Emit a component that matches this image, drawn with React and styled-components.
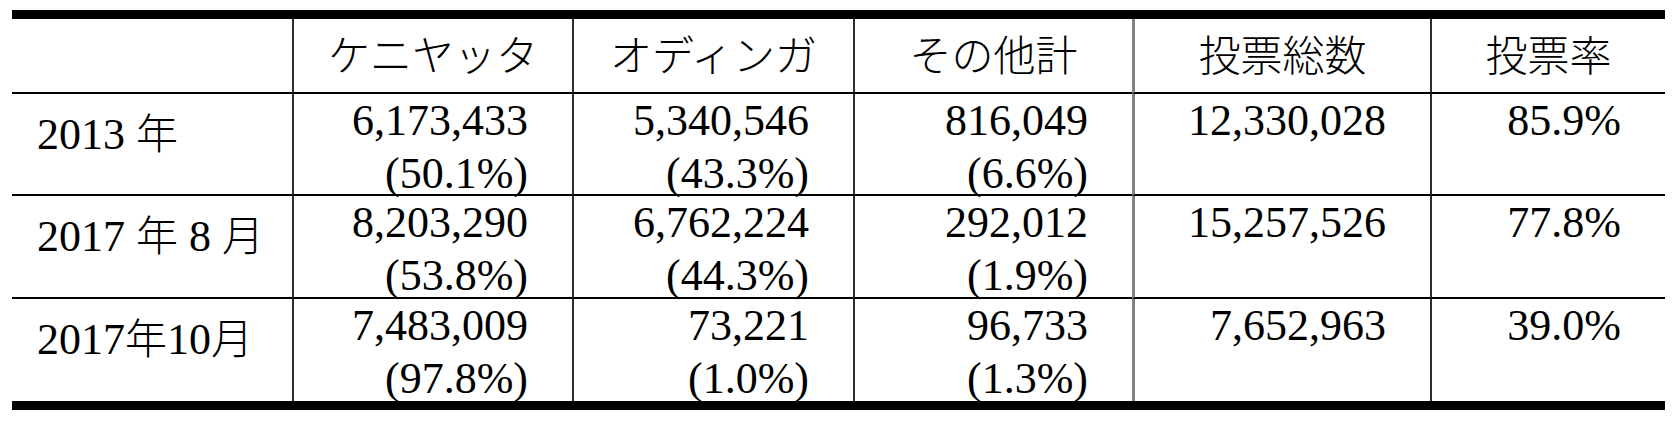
import React from 'react';
import styled, { createGlobalStyle } from 'styled-components';

const GlobalStyle = createGlobalStyle`
    html, body {
        margin: 0;
        padding: 0;
        background: #fff;
    }
    body {
        font-family: "Liberation Serif", serif;
        color: #000;
    }
`;

// Styled components
const Page = styled.div`
    padding: 10px 11px 0 12px;
`;

const Grid = styled.div`
    display: grid;
    grid-template-columns: 280px 280px 281px 279px 298px 235px;
    grid-template-rows: 75px 102px 103px 102px;
    width: 1653px;
    border-top: 9px solid #000;
    border-bottom: 9px solid #000;
    font-family: "Liberation Serif", serif;
    font-size: 44px;
`;

const ruleFor = (col) => {
    if (col === 0) return 'none';
    if (col === 4) return '3px solid #838383';
    return '2px solid #2e2e2e';
};

const Cell = styled.div`
    box-sizing: border-box;
    border-left: ${({ $col }) => ruleFor($col)};
    border-bottom: ${({ $last }) => ($last ? 'none' : '2px solid #000')};
    min-width: 0;
`;

const HeadCell = styled(Cell)`
    display: flex;
    align-items: center;
    justify-content: center;
    padding-bottom: 6px;
    font-family: "Noto Sans CJK JP", sans-serif;
    font-weight: 300;
    font-size: 42px;
    line-height: 1;
`;

const Kanji = styled.span`
    font-family: "Noto Sans CJK JP", sans-serif;
    font-weight: 300;
    font-size: 42px;
`;

const YearCell = styled(Cell)`
    padding: 10px 0 0 25px;
    line-height: 53px;
    white-space: nowrap;
`;

const NumCell = styled(Cell)`
    padding: 0 44px 0 0;
    text-align: right;
    line-height: 53px;
    white-space: nowrap;
`;

const Line = styled.span`
    display: block;
`;

const headers = ['', 'ケニヤッタ', 'オディンガ', 'その他計', '投票総数', '投票率'];

const rows = [
    {
        label: [['2013 '], ['年', true]],
        kenyatta: ['6,173,433', '(50.1%)'],
        odinga: ['5,340,546', '(43.3%)'],
        others: ['816,049', '(6.6%)'],
        total: '12,330,028',
        turnout: '85.9%',
    },
    {
        label: [['2017 '], ['年', true], [' 8 '], ['月', true]],
        kenyatta: ['8,203,290', '(53.8%)'],
        odinga: ['6,762,224', '(44.3%)'],
        others: ['292,012', '(1.9%)'],
        total: '15,257,526',
        turnout: '77.8%',
    },
    {
        label: [['2017'], ['年', true], ['10'], ['月', true]],
        kenyatta: ['7,483,009', '(97.8%)'],
        odinga: ['73,221', '(1.0%)'],
        others: ['96,733', '(1.3%)'],
        total: '7,652,963',
        turnout: '39.0%',
    },
];

const App = () => {
    return (
        <Page>
            <GlobalStyle />
            <Grid>
                {headers.map((h, i) => (
                    <HeadCell key={i} $col={i}>{h}</HeadCell>
                ))}
                {rows.map((r, ri) => {
                    const last = ri === rows.length - 1;
                    return (
                        <React.Fragment key={ri}>
                            <YearCell $col={0} $last={last}>
                                {r.label.map(([t, cjk], i) =>
                                    cjk ? <Kanji key={i}>{t}</Kanji> : <React.Fragment key={i}>{t}</React.Fragment>
                                )}
                            </YearCell>
                            {[r.kenyatta, r.odinga, r.others].map((pair, ci) => (
                                <NumCell key={ci} $col={ci + 1} $last={last}>
                                    <Line>{pair[0]}</Line>
                                    <Line>{pair[1]}</Line>
                                </NumCell>
                            ))}
                            <NumCell $col={4} $last={last}>{r.total}</NumCell>
                            <NumCell $col={5} $last={last}>{r.turnout}</NumCell>
                        </React.Fragment>
                    );
                })}
            </Grid>
        </Page>
    );
};

export default App;
